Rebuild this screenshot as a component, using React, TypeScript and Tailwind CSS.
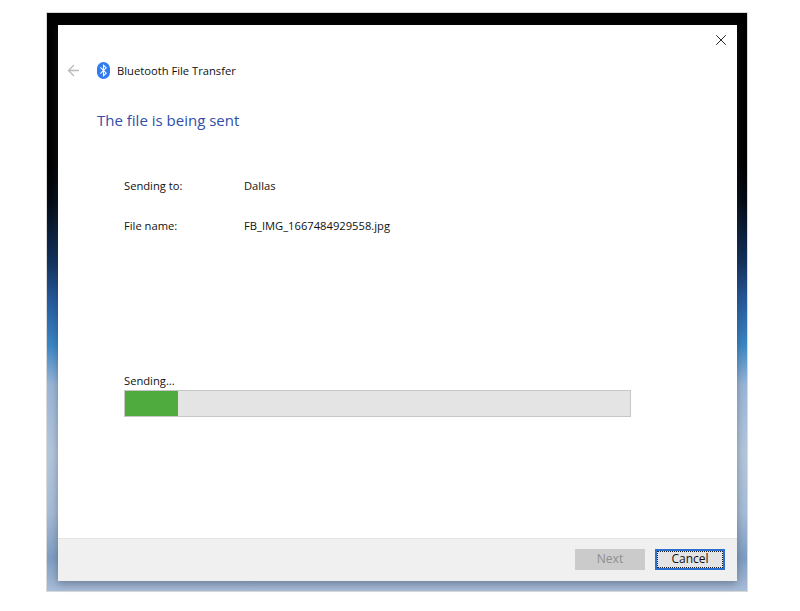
import { ArrowLeft, X } from "lucide-react"

const font = "font-['Open_Sans','Noto_Sans',sans-serif]"

const BluetoothBadge = () => (
  <svg width="13" height="17" viewBox="0 0 13 17" className="shrink-0">
    <rect x="0" y="0" width="13" height="17" rx="6.5" fill="#2f7bf0" />
    <path d="M3.4 5.4 9.2 11.2 6.5 13.8V3.2L9.2 5.8 3.4 11.6" fill="none" stroke="#fff" strokeWidth="1.1" />
  </svg>
)

const App = () => {
  return (
    <div className={`w-[800px] h-[611px] bg-white pt-[13px] pl-[47px] ${font}`}>
      <div className="w-[700px] h-[578px] pt-3 pl-[11px] shadow-[0_0_0_1px_rgba(130,130,130,0.3)] bg-[linear-gradient(180deg,#000_0,#000_150px,#040a14_187px,#12305a_247px,#265a9c_287px,#3a86c6_332px,#9ab6d6_372px,#b4c6dc_440px,#a6bcd6_500px,#7f9dc2_545px,#a9bdd8_578px)]">
        <div className="w-[679px] h-[556px] flex flex-col bg-white shadow-[0_3px_8px_rgba(40,50,70,0.4)]">
          <div className="flex-1 flex flex-col relative">
            <button className="absolute top-[3px] right-[4px] w-6 h-6 flex items-center justify-center text-[#222]" aria-label="Close">
              <X size={18} strokeWidth={1.3} />
            </button>

            <div className="flex items-center mt-[37px] ml-[7px] h-[17px]">
              <ArrowLeft size={17} strokeWidth={1.8} className="text-[#b9b9b9]" />
              <div className="ml-[15px]">
                <BluetoothBadge />
              </div>
              <span className="ml-[7px] text-[11.2px] leading-none text-[#111]">Bluetooth File Transfer</span>
            </div>

            <h1 className="mt-[30px] ml-[39px] text-[15px] leading-[22px] text-[#2f4fa8]">The file is being sent</h1>

            <div className="mt-[47px] ml-[66px] flex flex-col gap-[24px] text-[11.2px] leading-[16px] text-[#111]">
              <div className="flex">
                <span className="w-[120px]">Sending to:</span>
                <span>Dallas</span>
              </div>
              <div className="flex">
                <span className="w-[120px]">File name:</span>
                <span>FB_IMG_1667484929558.jpg</span>
              </div>
            </div>

            <div className="mt-[139px] ml-[66px] w-[507px]">
              <div className="text-[11.2px] leading-[16px] text-[#111]">Sending...</div>
              <div className="mt-px h-[27px] bg-[#e4e4e4] border border-[#c6c6c6]">
                <div className="h-full w-[53px] bg-[#4fab3e]" />
              </div>
            </div>
          </div>

          <div className="h-[43px] bg-[#f0f0f0] border-t border-[#e4e4e4] flex items-center justify-end gap-[10px] pr-[12px] pb-[2px]">
            <button className="w-[70px] h-[21px] bg-[#cbcbcb] text-[12px] text-[#8f8f8f] leading-none">Next</button>
            <button className="w-[70px] h-[21px] bg-[#e4e4e4] border-2 border-[#2b6fd0] outline-1 outline-dotted -outline-offset-3 outline-[#222] text-[12px] text-[#111] leading-none">Cancel</button>
          </div>
        </div>
      </div>
    </div>
  )
}

export default App
